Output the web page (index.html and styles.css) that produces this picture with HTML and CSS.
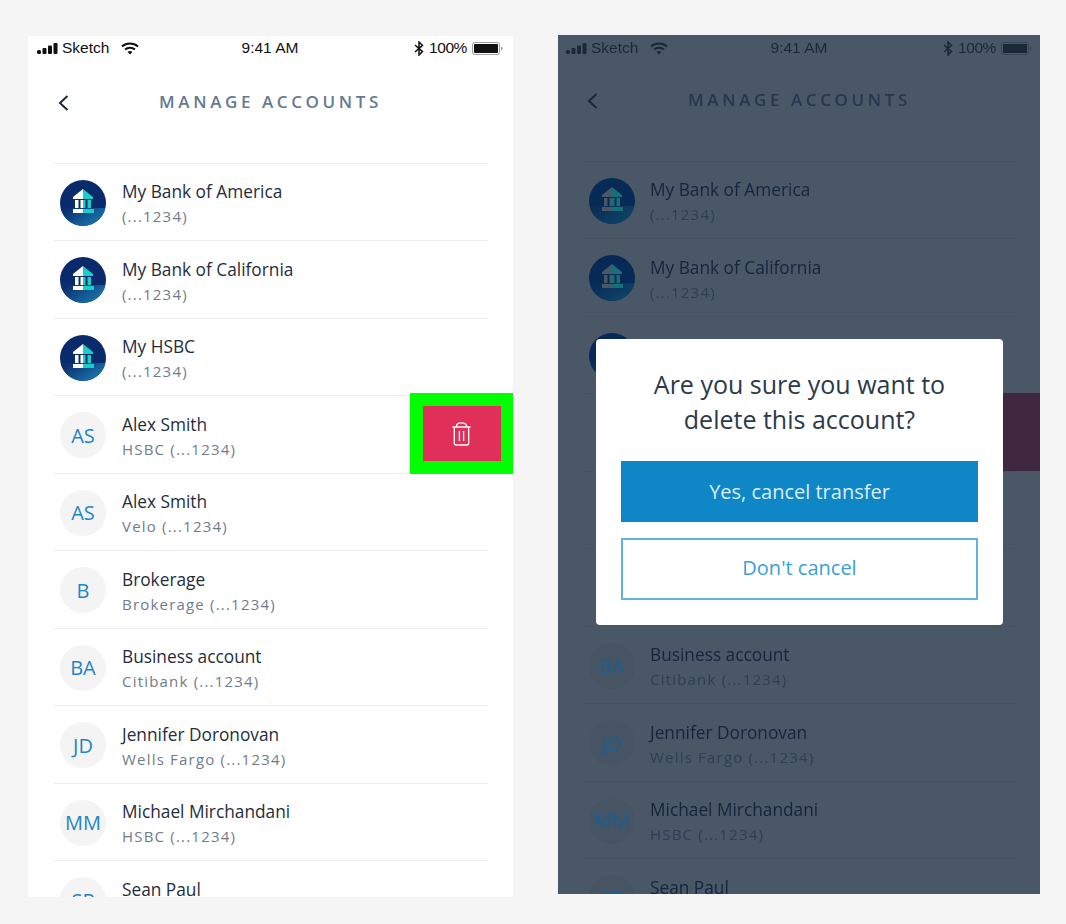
FILE: index.html
```html
<!DOCTYPE html>
<html lang="en">
<head>
    <meta charset="UTF-8">
    <title>Manage Accounts</title>
    <link rel="stylesheet" href="styles.css">
</head>
<body>
    <svg class="defs" width="0" height="0">
        <defs>
            <linearGradient id="sea" x1="0" y1="0" x2="1" y2="0.6">
                <stop offset="0.15" stop-color="#0b2f70"/>
                <stop offset="1" stop-color="#1b76ae"/>
            </linearGradient>
            <linearGradient id="sea-dim" x1="0" y1="0" x2="1" y2="0.6">
                <stop offset="0.15" stop-color="#082d58"/>
                <stop offset="1" stop-color="#0f4468"/>
            </linearGradient>
            <symbol id="bank" viewBox="0 0 46 46">
                <circle class="bank-sky" cx="23" cy="23" r="23"/>
                <path class="bank-sea" d="M0.6 28 H45.4 A23 23 0 0 1 0.6 28 Z"/>
                <path class="bank-light" d="M23 9 L13 17 V19 H23 Z"/>
                <path class="bank-teal" d="M23 9 L33 17 V19 H23 Z"/>
                <path class="bank-light" d="M15 20 H18.5 V28 H15 Z M20.5 20 H23 V28 H20.5 Z M13 29 H23 V33 H13 Z"/>
                <path class="bank-teal" d="M23 20 H25.5 V28 H23 Z M27.5 20 H31 V28 H27.5 Z M23 29 H34 V33 H23 Z"/>
            </symbol>
            <symbol id="signal" viewBox="0 0 21 11">
                <rect x="0" y="7" width="4" height="4" rx="1.5" fill="currentColor"/>
                <rect x="5.5" y="5" width="4" height="6" rx="1" fill="currentColor"/>
                <rect x="11" y="2.5" width="4" height="8.5" rx="1" fill="currentColor"/>
                <rect x="16.5" y="0" width="4" height="11" rx="1" fill="currentColor"/>
            </symbol>
            <symbol id="wifi" viewBox="0 0 18 13">
                <path d="M1 4.5 C5.5 0.5 12.5 0.5 17 4.5" fill="none" stroke="currentColor" stroke-width="2"/>
                <path d="M4 7.6 C6.8 5.2 11.2 5.2 14 7.6" fill="none" stroke="currentColor" stroke-width="2"/>
                <path d="M6.6 10 C8 8.8 10 8.8 11.4 10 L9 12.6 Z" fill="currentColor"/>
            </symbol>
            <symbol id="bluetooth" viewBox="0 0 10 15">
                <path d="M1 4 L8.5 10.6 L5 14 V1 L8.5 4.4 L1 11" fill="none" stroke="currentColor" stroke-width="1.5"/>
            </symbol>
            <symbol id="battery" viewBox="0 0 31 13">
                <rect x="0.5" y="0.5" width="27" height="12" rx="2.5" fill="none" stroke="currentColor" stroke-opacity="0.4"/>
                <rect x="2" y="2" width="24" height="9" rx="1" fill="currentColor"/>
                <path d="M29 4.5 C30 4.8 30.5 5.5 30.5 6.5 C30.5 7.5 30 8.2 29 8.5 Z" fill="currentColor" fill-opacity="0.4"/>
            </symbol>
            <symbol id="back" viewBox="0 0 11 16">
                <path d="M9.5 1 L2 8 L9.5 15" fill="none" stroke="currentColor" stroke-width="2"/>
            </symbol>
        </defs>
    </svg>

    <div class="page">
        <!-- swipe state -->
        <div class="phone">
            <div class="screen">
                <div class="status">
                    <div class="status-side">
                        <svg class="ic-signal"><use href="#signal"/></svg>
                        <span>Sketch</span>
                        <svg class="ic-wifi"><use href="#wifi"/></svg>
                    </div>
                    <span class="status-time">9:41 AM</span>
                    <div class="status-side status-right">
                        <svg class="ic-bt"><use href="#bluetooth"/></svg>
                        <span>100%</span>
                        <svg class="ic-battery"><use href="#battery"/></svg>
                    </div>
                </div>
                <div class="header">
                    <svg class="ic-back"><use href="#back"/></svg>
                    <h1>MANAGE ACCOUNTS</h1>
                </div>
                <ul class="accounts">
                    <li class="row"><svg class="avatar"><use href="#bank"/></svg><div><p class="name">My Bank of America</p><p class="sub">(...1234)</p></div></li>
                    <li class="row"><svg class="avatar"><use href="#bank"/></svg><div><p class="name">My Bank of California</p><p class="sub">(...1234)</p></div></li>
                    <li class="row"><svg class="avatar"><use href="#bank"/></svg><div><p class="name">My HSBC</p><p class="sub">(...1234)</p></div></li>
                    <li class="row"><span class="avatar initials">AS</span><div><p class="name">Alex Smith</p><p class="sub">HSBC (...1234)</p></div>
                        <div class="swipe">
                            <div class="swipe-delete">
                                <svg class="ic-trash" viewBox="0 0 19 24" fill="none" stroke="#fff" stroke-width="1.3">
                                    <path d="M0.5 5 H18.5 M4.5 5 V4 C4.5 1.8 6.5 0.8 9.5 0.8 C12.5 0.8 14.5 1.8 14.5 4 V5"/>
                                    <path d="M2.3 5 V21 C2.3 22.3 3 23 4.3 23 H14.7 C16 23 16.7 22.3 16.7 21 V5"/>
                                    <path d="M7.4 9 V19 M11.6 9 V19"/>
                                </svg>
                            </div>
                        </div>
                    </li>
                    <li class="row"><span class="avatar initials">AS</span><div><p class="name">Alex Smith</p><p class="sub">Velo (...1234)</p></div></li>
                    <li class="row"><span class="avatar initials">B</span><div><p class="name">Brokerage</p><p class="sub">Brokerage (...1234)</p></div></li>
                    <li class="row"><span class="avatar initials">BA</span><div><p class="name">Business account</p><p class="sub">Citibank (...1234)</p></div></li>
                    <li class="row"><span class="avatar initials">JD</span><div><p class="name">Jennifer Doronovan</p><p class="sub">Wells Fargo (...1234)</p></div></li>
                    <li class="row"><span class="avatar initials">MM</span><div><p class="name">Michael Mirchandani</p><p class="sub">HSBC (...1234)</p></div></li>
                    <li class="row"><span class="avatar initials">SP</span><div><p class="name">Sean Paul</p><p class="sub">(...1234)</p></div></li>
                </ul>
            </div>
        </div>

        <!-- confirm state -->
        <div class="phone phone-dim">
            <div class="screen">
                <div class="status">
                    <div class="status-side">
                        <svg class="ic-signal"><use href="#signal"/></svg>
                        <span>Sketch</span>
                        <svg class="ic-wifi"><use href="#wifi"/></svg>
                    </div>
                    <span class="status-time">9:41 AM</span>
                    <div class="status-side status-right">
                        <svg class="ic-bt"><use href="#bluetooth"/></svg>
                        <span>100%</span>
                        <svg class="ic-battery"><use href="#battery"/></svg>
                    </div>
                </div>
                <div class="header">
                    <svg class="ic-back"><use href="#back"/></svg>
                    <h1>MANAGE ACCOUNTS</h1>
                </div>
                <ul class="accounts">
                    <li class="row"><svg class="avatar"><use href="#bank"/></svg><div><p class="name">My Bank of America</p><p class="sub">(...1234)</p></div></li>
                    <li class="row"><svg class="avatar"><use href="#bank"/></svg><div><p class="name">My Bank of California</p><p class="sub">(...1234)</p></div></li>
                    <li class="row"><svg class="avatar"><use href="#bank"/></svg></li>
                    <li class="row"><div class="swipe-solid"></div></li>
                    <li class="row"></li>
                    <li class="row"></li>
                    <li class="row"><span class="avatar initials">BA</span><div><p class="name">Business account</p><p class="sub">Citibank (...1234)</p></div></li>
                    <li class="row"><span class="avatar initials">JD</span><div><p class="name">Jennifer Doronovan</p><p class="sub">Wells Fargo (...1234)</p></div></li>
                    <li class="row"><span class="avatar initials">MM</span><div><p class="name">Michael Mirchandani</p><p class="sub">HSBC (...1234)</p></div></li>
                    <li class="row"><span class="avatar initials">SP</span><div><p class="name">Sean Paul</p><p class="sub">(...1234)</p></div></li>
                </ul>
            </div>
            <div class="dialog">
                <h2>Are you sure you want to delete this account?</h2>
                <button class="btn btn-primary">Yes, cancel transfer</button>
                <button class="btn btn-outline">Don't cancel</button>
            </div>
        </div>
    </div>
</body>
</html>
```

FILE: styles.css
```css
* {
    box-sizing: border-box;
}
html, body {
    height: 100%;
}
body {
    margin: 0;
    background: #f5f5f5;
    font-family: "Open Sans", "Noto Sans", sans-serif;
    overflow: hidden;
}
.defs {
    position: absolute;
}
.page {
    display: flex;
    align-items: flex-start;
    gap: 45px;
    padding: 36px 0 0 28px;
}

/* phone frames */
.phone {
    --text: #1f2d3d;
    --sub: #6f7c8b;
    --title: #667a90;
    --line: #ececec;
    --chip: #f4f4f4;
    --chip-text: #1f86c6;
    --status: #111;
    --back: #1b2b3c;
    --bank-sky: #0a2b6b;
    --bank-sea: url(#sea);
    --bank-light: #fff;
    --bank-teal: #17cfc9;
    position: relative;
    width: 485px;
    height: 861px;
    background: #fff;
    overflow: hidden;
    flex: none;
}
/* dimmed behind the dialog */
.phone-dim {
    --text: #14263e;
    --sub: #2c3f56;
    --title: #24384f;
    --line: #465362;
    --chip: #475464;
    --chip-text: #1a5f92;
    --status: #1a2838;
    --back: #18293d;
    --bank-sky: #062a55;
    --bank-sea: url(#sea-dim);
    --bank-light: #4a5766;
    --bank-teal: #157077;
    width: 482px;
    height: 859px;
    margin-top: -1px;
    background: #4a5766;
}
.screen {
    width: 485px;
}
.phone-dim .screen {
    margin: -1px 0 0 -1px;
    filter: blur(0.5px);
}
.phone-dim .status {
    margin-top: 2px;
    margin-bottom: -2px;
}
.phone-dim .row {
    gap: 15px;
}

/* status bar */
.status {
    display: grid;
    grid-template-columns: 1fr auto 1fr;
    align-items: center;
    height: 24px;
    padding: 0 10px 0 9px;
    font-family: "Liberation Sans", Arial, sans-serif;
    font-size: 15.5px;
    color: var(--status);
}
.status-side {
    display: flex;
    align-items: center;
}
.status-right {
    justify-content: flex-end;
    letter-spacing: -0.4px;
}
.ic-signal {
    width: 21px;
    height: 11px;
    margin-right: 4px;
}
.ic-wifi {
    width: 18px;
    height: 13px;
    margin-left: 12px;
}
.ic-bt {
    width: 10px;
    height: 15px;
    margin-right: 5px;
}
.ic-battery {
    width: 31px;
    height: 13px;
    margin-left: 5px;
}

/* header */
.header {
    position: relative;
    display: flex;
    justify-content: center;
    align-items: center;
    height: 52px;
    margin-top: 15px;
    margin-bottom: 36px;
    color: var(--back);
}
.ic-back {
    position: absolute;
    left: 30px;
    top: 20px;
    width: 11px;
    height: 16px;
}
h1 {
    margin: 0;
    font-size: 17px;
    font-weight: 600;
    letter-spacing: 3.6px;
    color: var(--title);
}

/* list */
.accounts {
    list-style: none;
    margin: -0.4px 25px 0 26px;
    padding: 0;
    border-top: 1px solid var(--line);
}
.row {
    position: relative;
    display: flex;
    align-items: center;
    gap: 16px;
    height: 77.5px;
    padding-left: 6px;
    border-bottom: 1px solid var(--line);
}
.avatar {
    width: 46px;
    height: 46px;
    margin-top: 2px;
    flex: none;
}
.bank-sky {
    fill: var(--bank-sky);
}
.bank-sea {
    fill: var(--bank-sea);
}
.bank-light {
    fill: var(--bank-light);
}
.bank-teal {
    fill: var(--bank-teal);
}
.initials {
    display: flex;
    justify-content: center;
    align-items: center;
    border-radius: 50%;
    background: var(--chip);
    color: var(--chip-text);
    font-size: 20px;
}
.name, .sub {
    margin: 0;
    white-space: nowrap;
}
.name {
    font-size: 17.3px;
    line-height: 24px;
    margin-top: 5px;
    color: var(--text);
}
.sub {
    font-size: 15px;
    line-height: 24px;
    letter-spacing: 1.2px;
    color: var(--sub);
}

/* swipe actions */
.swipe {
    position: absolute;
    top: -3px;
    right: -26px;
    width: 104px;
    height: 81px;
    padding: 13px;
    background: #00ff00;
}
.swipe-delete {
    display: flex;
    justify-content: center;
    align-items: center;
    height: 55px;
    background: #e0305a;
}
.ic-trash {
    width: 19px;
    height: 24px;
    margin: 1px 1px 0 0;
}
.swipe-solid {
    position: absolute;
    top: -1px;
    right: -25px;
    width: 104px;
    height: 78px;
    background: #3f2740;
}

/* modal */
.dialog {
    position: absolute;
    left: 38px;
    top: 304px;
    display: flex;
    flex-direction: column;
    width: 407px;
    height: 286px;
    padding: 28px 25px 0;
    border-radius: 4px;
    background: #fff;
}
h2 {
    margin: 0 0 24px;
    padding: 0 22px;
    font-size: 25px;
    font-weight: 400;
    line-height: 35px;
    text-align: center;
    color: #2b3a4a;
}
.btn {
    width: 357px;
    height: 61px;
    border: none;
    border-radius: 0;
    font-family: inherit;
    font-size: 20px;
}
.btn-primary {
    background: #0f86c6;
    color: #d8eef9;
}
.btn-outline {
    height: 62px;
    margin-top: 16px;
    padding-bottom: 4px;
    border: 2px solid #62b2de;
    background: #fff;
    color: #3aa0da;
}
```
